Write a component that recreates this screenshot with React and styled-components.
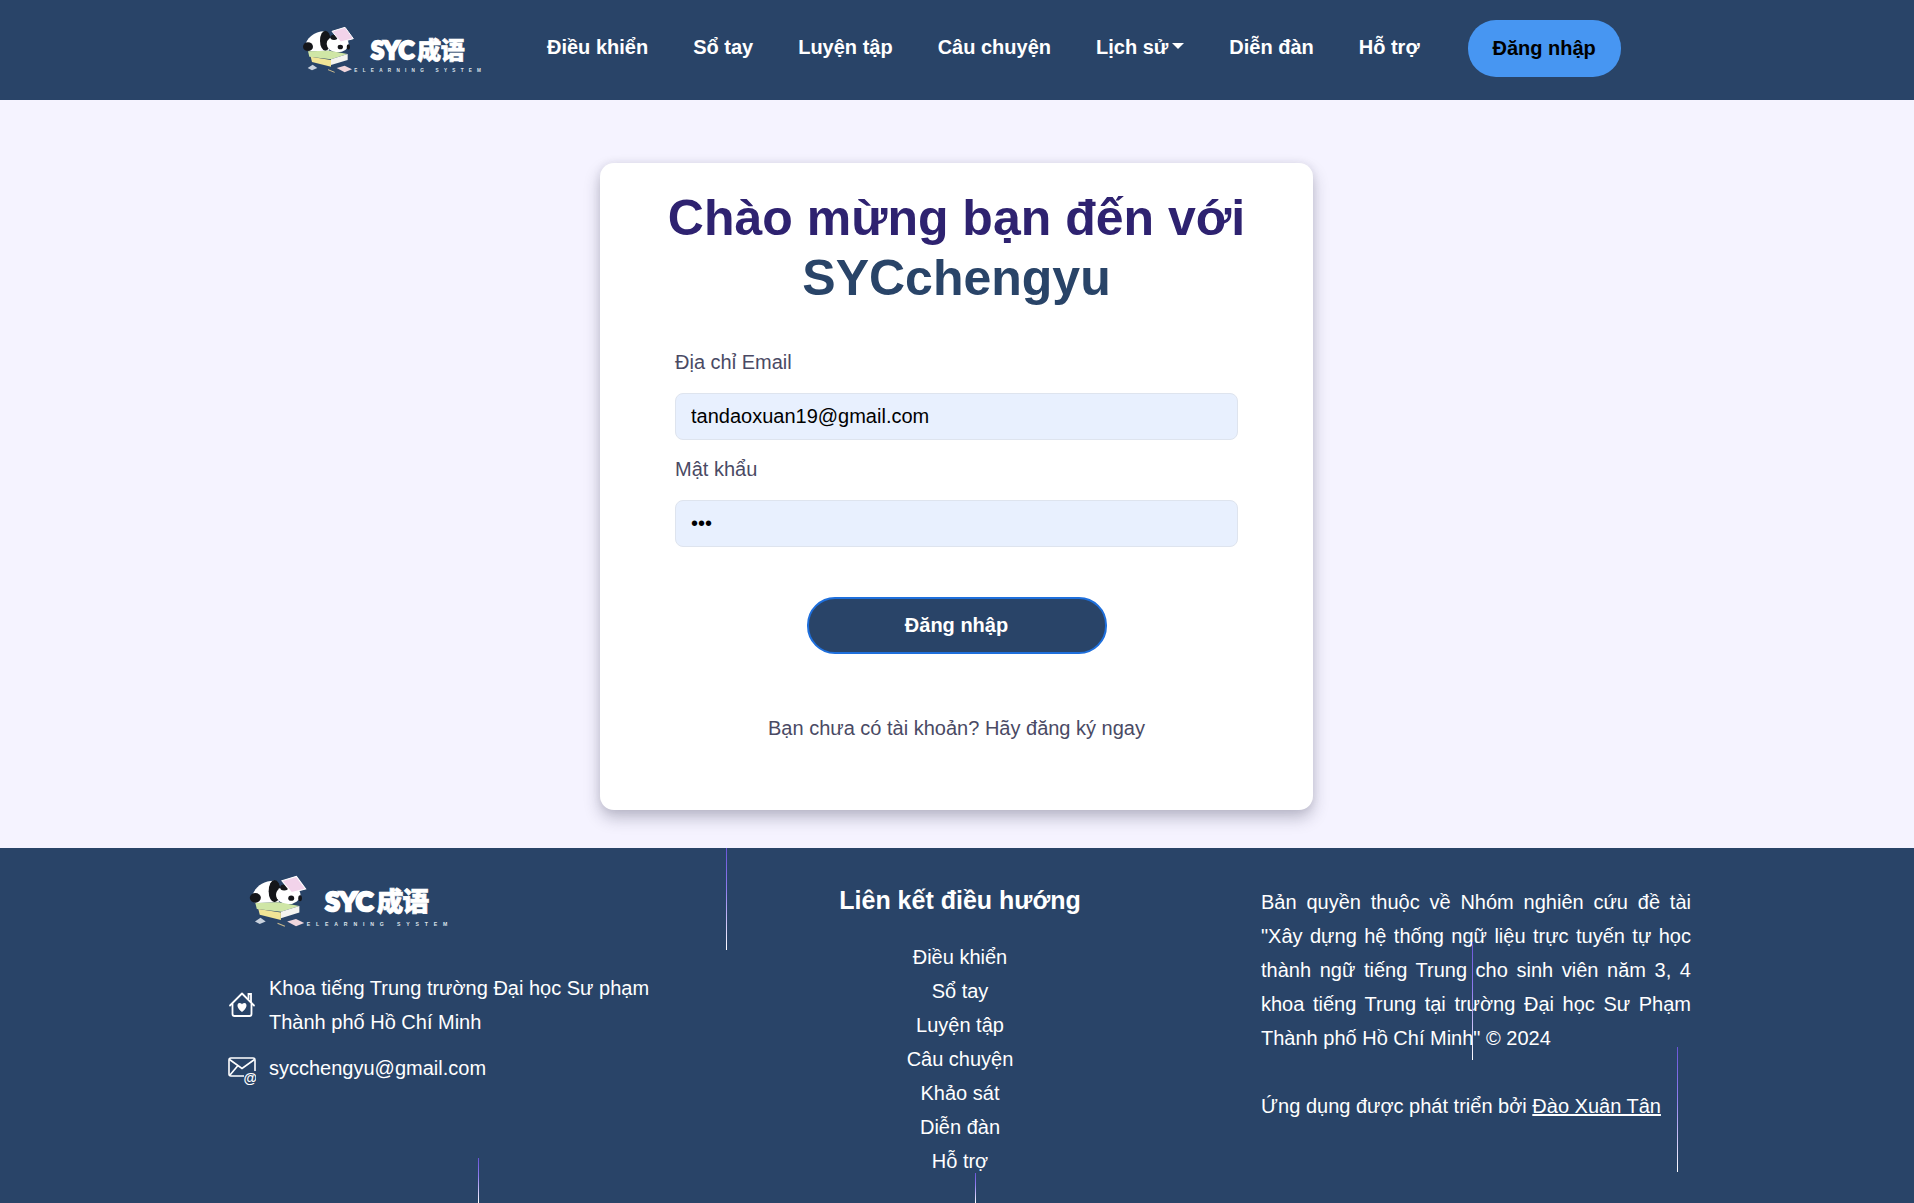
import React from "react"
import styled, { createGlobalStyle } from "styled-components"

const navy = "#294468"

const Global = createGlobalStyle`
  * { box-sizing: border-box; }
  html, body { margin: 0; padding: 0; }
  body {
    background: #f5f3ff;
    font-family: "Liberation Sans", Arial, sans-serif;
  }
`

const Page = styled.div`
  display: flex;
  flex-direction: column;
  min-height: 1203px;
`

const Header = styled.header`
  height: 100px;
  flex: none;
  background: ${navy};
  display: flex;
  align-items: center;
  padding-left: 296px;
`

const Nav = styled.nav`
  display: flex;
  align-items: center;
  gap: 45px;
  margin-left: 51px;
`

const NavLink = styled.a`
  display: flex;
  align-items: center;
  gap: 4px;
  color: #fff;
  font-size: 20px;
  font-weight: 700;
  line-height: 30px;
  margin-top: -6px;
  white-space: nowrap;
`

const Caret = styled.span`
  width: 0;
  height: 0;
  border-left: 6px solid transparent;
  border-right: 6px solid transparent;
  border-top: 6px solid #fff;
  margin-top: -2px;
`

const LoginPill = styled.button`
  width: 153px;
  height: 57px;
  margin: -4px 0 0 3px;
  border: 0;
  border-radius: 28px;
  background: #4796f2;
  color: #000;
  font: 700 20px "Liberation Sans", Arial, sans-serif;
`

const Main = styled.main`
  flex: none;
  display: flex;
  justify-content: center;
  padding: 63px 1px 38px 0;
`

const Card = styled.section`
  width: 713px;
  height: 647px;
  padding: 25px 75px 0;
  background: #fff;
  border-radius: 14px;
  box-shadow: 0 8px 16px rgba(40, 40, 70, 0.28), 0 0 8px rgba(40, 40, 70, 0.08);
`

const Title = styled.h1`
  margin: 0 -40px 39px;
  text-align: center;
  font-size: 50px;
  line-height: 60px;
  font-weight: 700;
  color: #2e2270;
  white-space: nowrap;
`

const Brand = styled.span`
  color: ${navy};
`

const Field = styled.div`
  display: flex;
  flex-direction: column;
  margin-bottom: 14px;
`

const Label = styled.label`
  font-size: 20px;
  line-height: 30px;
  color: #4a4a64;
  margin-bottom: 16px;
`

const Input = styled.input`
  height: 47px;
  padding: 0 15px;
  background: #e8f0fe;
  border: 1px solid #dee4ee;
  border-radius: 8px;
  color: #000;
  font: 20px "Liberation Sans", Arial, sans-serif;
  outline: none;
`

const Submit = styled.button`
  display: block;
  width: 300px;
  height: 57px;
  margin: 50px auto 59px;
  background: ${navy};
  border: 2px solid #1e6fdc;
  border-radius: 28px;
  color: #fff;
  font: 700 20px "Liberation Sans", Arial, sans-serif;
`

const SignUp = styled.p`
  margin: 0;
  text-align: center;
  font-size: 20px;
  line-height: 30px;
  color: #4a4a64;
`

const Footer = styled.footer`
  position: relative;
  height: 355px;
  overflow: hidden;
  background: ${navy};
  color: #fff;
  display: grid;
  grid-template-columns: 431px 602px 430px;
  padding-left: 228px;
  font-size: 20px;
  line-height: 34px;
`

const ContactColumn = styled.div`
  padding-top: 18px;
`

const FooterLogo = styled.div`
  margin: 0 0 33px 14px;
`

const Contact = styled.div`
  display: flex;
  align-items: center;
  gap: 13px;
  margin-bottom: 12px;
  white-space: nowrap;
`

const ContactIcon = styled.svg`
  width: 28px;
  height: 34px;
  flex: none;
`

const LinksColumn = styled.div`
  display: flex;
  flex-direction: column;
  align-items: center;
  padding-top: 35px;
`

const LinksTitle = styled.h3`
  margin: 0 0 23px;
  font-size: 25px;
  line-height: 34px;
  font-weight: 700;
`

const FooterLink = styled.a`
  color: #fff;
`

const CopyColumn = styled.div`
  padding-top: 37px;
`

const Copy = styled.p`
  margin: 0 0 34px;
  text-align: ${p => (p.$justify ? "justify" : "left")};
`

const Author = styled.a`
  color: #fff;
  text-decoration: underline;
`

const Beam = styled.span`
  position: absolute;
  width: 1px;
  left: ${p => p.$x}px;
  top: ${p => p.$y}px;
  height: ${p => p.$h}px;
  background: linear-gradient(to bottom, #6a55d8, #8f7cf0 40%, #fff);
`

const Logo = ({ width }) => (
  <svg width={width} viewBox="0 0 600 195" style={{ display: "block" }}>
    {/* panda */}
    <path d="M26 88 C30 60 56 38 90 40 L100 98 L44 100 C34 100 28 96 26 88Z" fill="#fff" />
    <ellipse cx="36" cy="86" rx="15" ry="13" fill="#15161a" />
    <ellipse cx="88" cy="68" rx="16" ry="30" fill="#15161a" />
    <ellipse cx="125" cy="78" rx="33" ry="25" fill="#fff" />
    <ellipse cx="114" cy="58" rx="11" ry="8" fill="#15161a" />
    <ellipse cx="133" cy="87" rx="8" ry="7" fill="#15161a" />
    <ellipse cx="157" cy="87" rx="5" ry="8" fill="#15161a" />
    <path d="M108 40 L147 28 L172 62 L134 72Z" fill="#f2d3ea" stroke="#fff" strokeWidth="3" />
    {/* books */}
    <path d="M36 100 L100 98 L155 108 L105 124 L40 116Z" fill="#cfe6a6" />
    <path d="M105 124 L155 108 L155 126 L105 141Z" fill="#f4f4f0" />
    <path d="M44 116 L105 126 L105 146 L48 132Z" fill="#f1e596" />
    <path d="M35 150 L50 140 L64 150 L48 157Z" fill="#c9d2de" />
    <path d="M122 150 L146 143 L168 154 L146 163Z" fill="#f0d6dc" />
    <path d="M96 155 L116 163" stroke="#c9b98c" strokeWidth="3" />
    {/* wordmark */}
    <text x="225" y="122" fontFamily="Lato, 'Liberation Sans', sans-serif" fontWeight="900" fontSize="74" fill="#fff" stroke="#fff" strokeWidth="7" textLength="130" lengthAdjust="spacingAndGlyphs">SYC</text>
    <text x="364" y="122" fontFamily="'Noto Sans CJK SC', sans-serif" fontWeight="900" fontSize="72" fill="#fff" stroke="#fff" strokeWidth="2" textLength="142">成语</text>
    <text x="175" y="163" fontFamily="'Liberation Sans', sans-serif" fontWeight="700" fontSize="14" fill="#dfe4ec" textLength="380">ELEARNING  SYSTEM</text>
  </svg>
)

const HomeIcon = () => (
  <ContactIcon viewBox="0 0 28 34" fill="none" stroke="#fff" strokeWidth="1.800">
    <path d="M2 17.500 L14 5.500 L26 17.500" strokeLinejoin="round" strokeLinecap="round" />
    <path d="M4.500 15.500 V26 a2 2 0 0 0 2 2 H21.500 a2 2 0 0 0 2 -2 V15.500" />
    <path d="M20.500 11 V6 H23 V14" />
    <path d="M14 24 C8.500 20.500 8.500 15 11.500 15 C13 15 14 16 14 16.500 C14 16 15 15 16.500 15 C19.500 15 19.500 20.500 14 24Z" fill="#fff" stroke="none" />
  </ContactIcon>
)

const MailIcon = () => (
  <ContactIcon viewBox="0 0 28 34" fill="none" stroke="#fff" strokeWidth="1.600">
    <path d="M16 25 H3 a2 2 0 0 1 -2 -2 V9 a2 2 0 0 1 2 -2 H25 a2 2 0 0 1 2 2 V20" />
    <path d="M1.500 8.500 L14 17.500 L26.500 8.500" />
    <path d="M2 24 L10 14.500" />
    <text x="15.500" y="32" fontSize="14" fontWeight="700" fill="#fff" stroke="none" fontFamily="'Liberation Sans', sans-serif">@</text>
  </ContactIcon>
)

const navItems = ["Điều khiển", "Sổ tay", "Luyện tập", "Câu chuyện", "Lịch sử", "Diễn đàn", "Hỗ trợ"]
const footerLinks = ["Điều khiển", "Sổ tay", "Luyện tập", "Câu chuyện", "Khảo sát", "Diễn đàn", "Hỗ trợ"]
const beams = [
  { x: 726, y: 0, h: 102 },
  { x: 1472, y: 94, h: 118 },
  { x: 1677, y: 199, h: 125 },
  { x: 478, y: 310, h: 45 },
  { x: 975, y: 325, h: 30 }
]

const App = () => (
  <Page>
    <Global />
    <Header>
      <Logo width={200} />
      <Nav>
        {navItems.map(item => (
          <NavLink key={item}>
            {item}
            {item === "Lịch sử" && <Caret />}
          </NavLink>
        ))}
        <LoginPill>Đăng nhập</LoginPill>
      </Nav>
    </Header>
    <Main>
      <Card>
        <Title>
          Chào mừng bạn đến với
          <br />
          <Brand>SYCchengyu</Brand>
        </Title>
        <Field>
          <Label>Địa chỉ Email</Label>
          <Input type="email" readOnly value="tandaoxuan19@gmail.com" />
        </Field>
        <Field>
          <Label>Mật khẩu</Label>
          <Input type="password" readOnly value="123" />
        </Field>
        <Submit>Đăng nhập</Submit>
        <SignUp>Bạn chưa có tài khoản? Hãy đăng ký ngay</SignUp>
      </Card>
    </Main>
    <Footer>
      {beams.map(b => (
        <Beam key={b.x} $x={b.x} $y={b.y} $h={b.h} />
      ))}
      <ContactColumn>
        <FooterLogo>
          <Logo width={222} />
        </FooterLogo>
        <Contact>
          <HomeIcon />
          <div>
            Khoa tiếng Trung trường Đại học Sư phạm
            <br />
            Thành phố Hồ Chí Minh
          </div>
        </Contact>
        <Contact>
          <MailIcon />
          <div>sycchengyu@gmail.com</div>
        </Contact>
      </ContactColumn>
      <LinksColumn>
        <LinksTitle>Liên kết điều hướng</LinksTitle>
        {footerLinks.map(l => (
          <FooterLink key={l}>{l}</FooterLink>
        ))}
      </LinksColumn>
      <CopyColumn>
        <Copy $justify>
          Bản quyền thuộc về Nhóm nghiên cứu đề tài "Xây dựng hệ thống ngữ liệu trực tuyến tự học thành ngữ tiếng Trung cho sinh viên năm 3, 4 khoa tiếng Trung tại trường Đại học Sư Phạm Thành phố Hồ Chí Minh" © 2024
        </Copy>
        <Copy>
          Ứng dụng được phát triển bởi <Author>Đào Xuân Tân</Author>
        </Copy>
      </CopyColumn>
    </Footer>
  </Page>
)

export default App
